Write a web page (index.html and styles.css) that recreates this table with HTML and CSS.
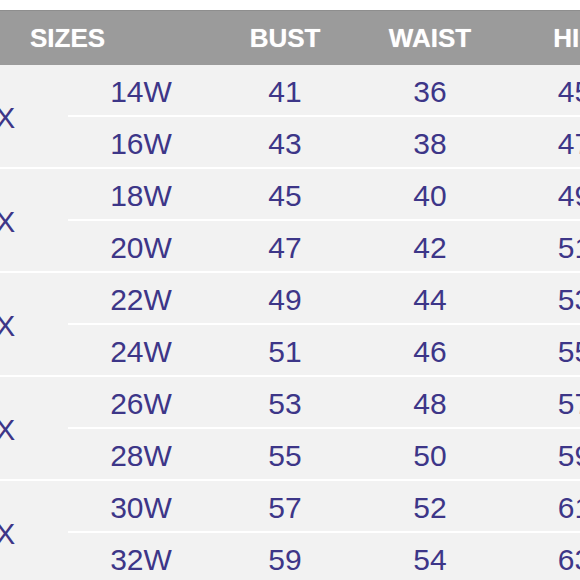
FILE: index.html
```html
<!DOCTYPE html>
<html>
<head>
<meta charset="utf-8">
<link rel="stylesheet" href="styles.css">
</head>
<body>
<div class="wrap">
<table class="chart">
<colgroup>
<col class="c-plus"><col class="c-w"><col class="c-bust"><col class="c-waist"><col class="c-hips">
</colgroup>
<thead>
<tr><th colspan="2" class="h-sizes">SIZES</th><th>BUST</th><th>WAIST</th><th class="h-hips">HIPS</th></tr>
</thead>
<tbody>
<tr><td rowspan="2" class="plus">1X</td><td>14W</td><td>41</td><td>36</td><td class="hips">45</td></tr>
<tr><td>16W</td><td>43</td><td>38</td><td class="hips">47</td></tr>
<tr><td rowspan="2" class="plus">2X</td><td>18W</td><td>45</td><td>40</td><td class="hips">49</td></tr>
<tr><td>20W</td><td>47</td><td>42</td><td class="hips">51</td></tr>
<tr><td rowspan="2" class="plus">3X</td><td>22W</td><td>49</td><td>44</td><td class="hips">53</td></tr>
<tr><td>24W</td><td>51</td><td>46</td><td class="hips">55</td></tr>
<tr><td rowspan="2" class="plus">4X</td><td>26W</td><td>53</td><td>48</td><td class="hips">57</td></tr>
<tr><td>28W</td><td>55</td><td>50</td><td class="hips">59</td></tr>
<tr><td rowspan="2" class="plus">5X</td><td>30W</td><td>57</td><td>52</td><td class="hips">61</td></tr>
<tr><td>32W</td><td>59</td><td>54</td><td class="hips">63</td></tr>
</tbody>
</table>
</div>
</body>
</html>
```
FILE: styles.css
```css
html, body {
  margin: 0;
  padding: 0;
  background: #ffffff;
  overflow: hidden;
  width: 580px;
  height: 580px;
}
.wrap {
  padding-top: 10px;
  width: 580px;
  overflow: hidden;
}
.chart {
  margin-left: -68px;
  width: 718px;
  table-layout: fixed;
  border-collapse: collapse;
  border-spacing: 0;
  font-family: "Liberation Sans", Arial, sans-serif;
}
.c-plus { width: 136px; }
.c-w { width: 146px; }
.c-bust { width: 142px; }
.c-waist { width: 148px; }
.c-hips { width: 146px; }
.chart th {
  background: #9b9b9b;
  border-top: 1px solid #8e8e8e;
  color: #ffffff;
  font-size: 26px;
  font-weight: bold;
  height: 54px;
  line-height: 54px;
  padding: 0;
  text-align: center;
  text-shadow: 0 0 1px rgba(255, 255, 255, 0.6);
  white-space: nowrap;
}
.chart th.h-sizes { padding-right: 11px; }
.chart th.h-hips { padding-left: 13px; }
.chart td {
  background: #f2f2f2;
  color: #3d3688;
  font-size: 30px;
  height: 46px;
  line-height: 46px;
  padding: 4px 0 0 0;
  text-align: center;
  border-bottom: 2px solid #ffffff;
  white-space: nowrap;
}
.chart td.plus { padding-right: 6px; vertical-align: middle; }
.chart td.hips { padding-right: 5px; }
```
